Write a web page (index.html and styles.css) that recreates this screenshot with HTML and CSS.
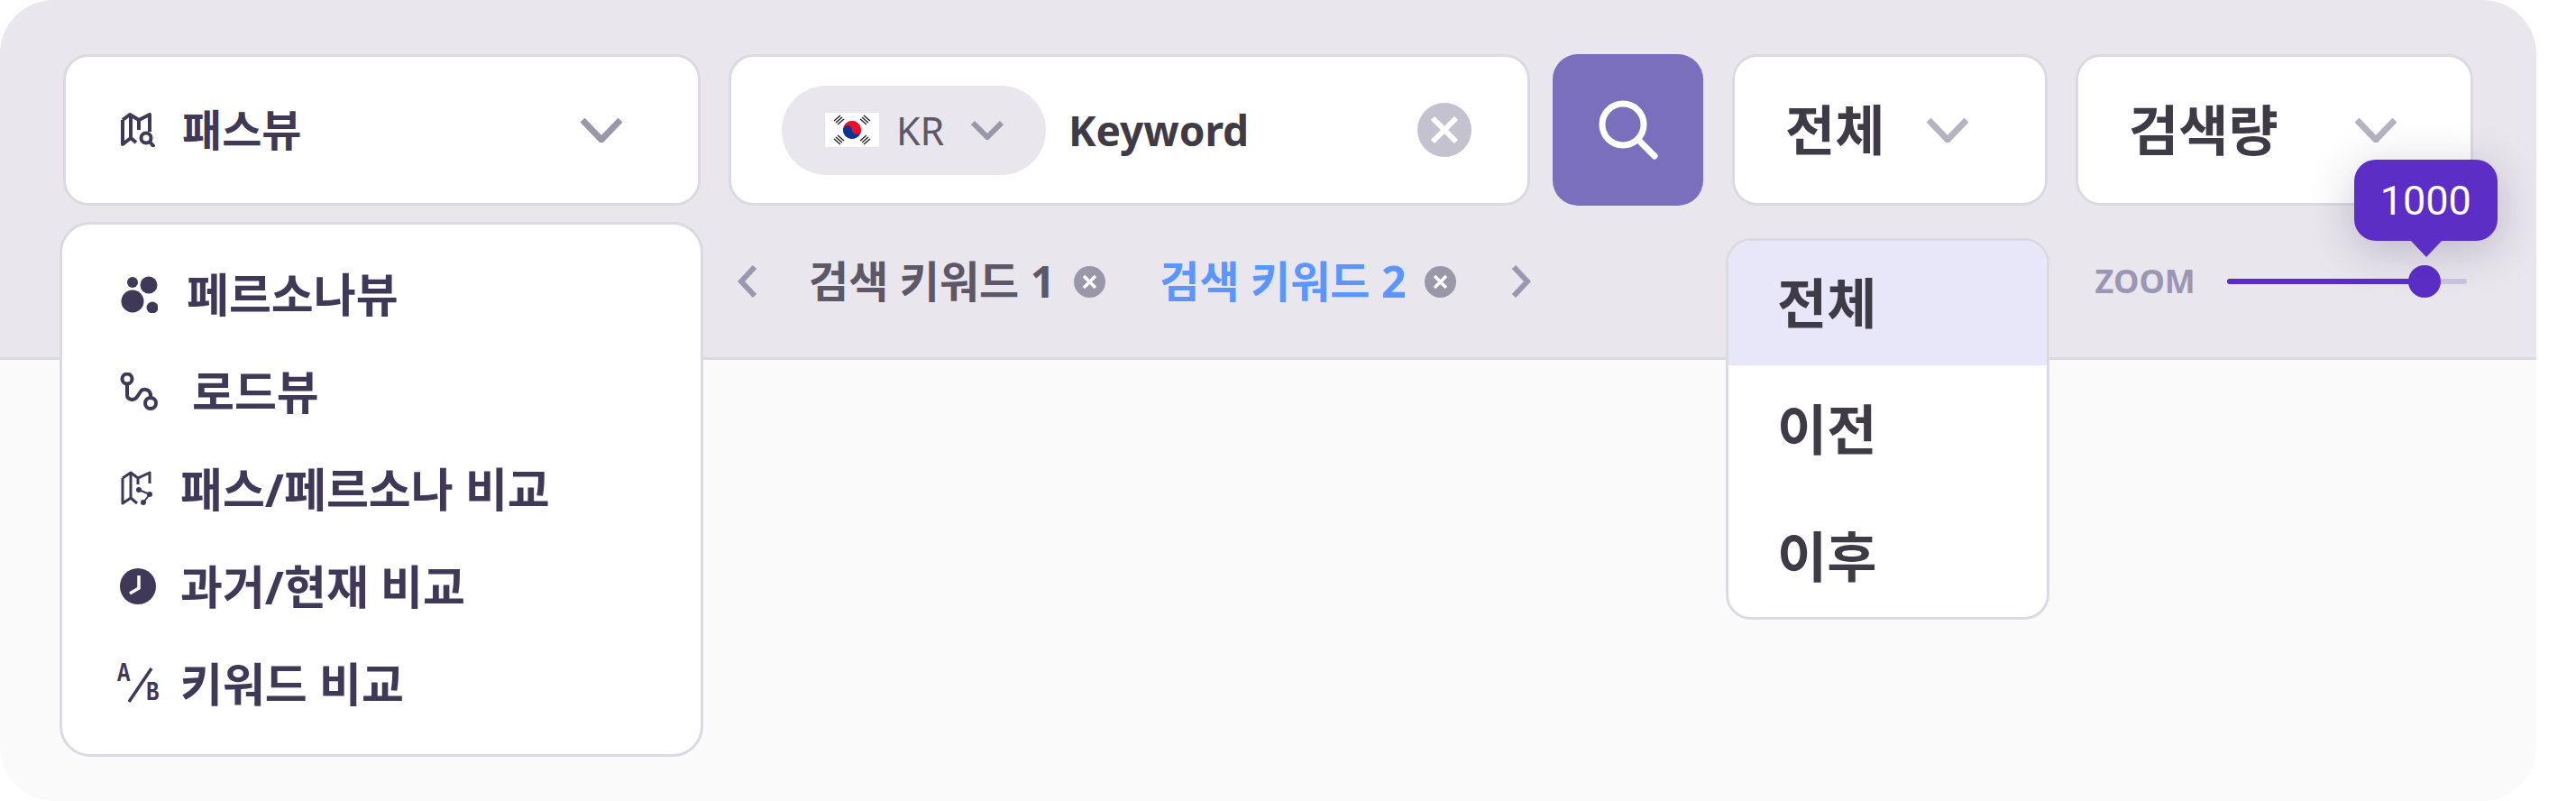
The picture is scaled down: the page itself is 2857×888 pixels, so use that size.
FILE: index.html
```html
<!DOCTYPE html>
<html lang="ko">
<head>
<meta charset="utf-8">
<title>패스뷰</title>
<link rel="stylesheet" href="styles.css">
</head>
<body>
<main class="card">
  <header class="topbar">
    <div class="row-controls">
      <div class="anchor">
        <button class="box view-select">
          <svg class="icon-38" viewBox="0 0 38 38"><path class="line" d="M2 8 10 2l10 6 12-6v19M2 8v27l9-7 6 5M11 2v26M20 8v11"/><circle class="line" cx="28" cy="28" r="5.5"/><path class="line" d="m32 32 5 6"/></svg>
          <span class="view-label">패스뷰</span>
          <svg class="chev-lg" viewBox="0 0 46 27"><path d="M2 2l21 22L44 2"/></svg>
        </button>
        <ul class="box menu">
          <li class="menu-item">
            <svg class="icon-42" viewBox="0 0 42 42"><circle cx="14" cy="29" r="12.5"/><circle cx="14" cy="8" r="6"/><circle cx="32" cy="11" r="9.5"/><circle cx="36" cy="36" r="6.5"/></svg>
            <span class="menu-text gap-persona">페르소나뷰</span>
          </li>
          <li class="menu-item">
            <svg class="icon-42" viewBox="0 0 42 42"><circle class="line" cx="8" cy="7" r="5.5"/><circle class="line" cx="34" cy="34" r="6"/><path class="line" d="M8 13v12q0 4 5 5 3 .5 6-3l4-6q2-3 6-2 5 1 5 7v2"/></svg>
            <span class="menu-text gap-road">로드뷰</span>
          </li>
          <li class="menu-item">
            <svg class="icon-42" viewBox="0 0 42 42"><path class="line-map" d="M3 9l9-6 8 6 13-6v12M3 9v28l9-6 7 6M12 3v28M20 9v7"/><circle cx="21" cy="22" r="3"/><circle cx="33" cy="27" r="3"/><circle cx="26" cy="36" r="3"/><path class="thin" d="M21 22l12 5-7 9"/></svg>
            <span class="menu-text gap-compare">패스/페르소나 비교</span>
          </li>
          <li class="menu-item">
            <svg class="icon-42" viewBox="0 0 42 42"><circle cx="20" cy="21" r="20"/><path class="hands" d="M21 9v14l-10 6"/></svg>
            <span class="menu-text gap-compare">과거/현재 비교</span>
          </li>
          <li class="menu-item">
            <div class="ab-icon">
              <svg class="ab-slash" viewBox="0 0 42 42"><path class="line-thin" d="M35 4 10 41"/></svg>
              <span class="ab-letter">A</span>
              <span class="ab-letter ab-b">B</span>
            </div>
            <span class="menu-text gap-compare">키워드 비교</span>
          </li>
        </ul>
      </div>

      <div class="box search">
        <div class="country">
          <svg class="flag" viewBox="0 0 60 38">
            <rect width="60" height="38" fill="#fff"/>
            <path d="M20 19a10 10 0 0 1 20 0z" fill="#e8112d"/>
            <path d="M20 19a10 10 0 0 0 20 0z" fill="#0c3590"/>
            <path d="M20 19a5 5 0 0 1 10 0 5 5 0 0 0 10 0 10 10 0 0 1-20 0z" fill="#0c3590"/>
            <path d="M30 19a5 5 0 0 0-10 0 10 10 0 0 1 20 0 5 5 0 0 1-10 0z" fill="#e8112d"/>
            <g class="trigrams">
              <path d="M10 9l7-6M12 11l7-6M14 13l7-6"/>
              <path d="M39 7l7 6M41 5l7 6M43 3l7 6"/>
              <path d="M10 29l7 6M12 27l7 6M14 25l7 6"/>
              <path d="M39 31l7-6M41 33l7-6M43 35l7-6"/>
            </g>
          </svg>
          <span class="country-code">KR</span>
          <svg class="chev-sm" viewBox="0 0 36 22"><path d="M2 3l16 16L34 3"/></svg>
        </div>
        <span class="keyword">Keyword</span>
        <svg class="clear" viewBox="0 0 60 60"><circle cx="30" cy="30" r="30"/><path d="M17 17l26 26M43 17 17 43"/></svg>
      </div>

      <button class="search-btn">
        <svg class="search-icon" viewBox="0 0 68 68"><circle cx="28" cy="28" r="23"/><path d="M45 45l18 18"/></svg>
      </button>

      <div class="anchor">
        <button class="box filter-select">
          <span class="big-label">전체</span>
          <svg class="chev-pale" viewBox="0 0 46 27"><path d="M2 2l21 22L44 2"/></svg>
        </button>
        <ul class="box filter-menu">
          <li class="filter-item is-active">전체</li>
          <li class="filter-item">이전</li>
          <li class="filter-item">이후</li>
        </ul>
      </div>

      <button class="box metric-select">
        <span class="big-label">검색량</span>
        <svg class="chev-pale" viewBox="0 0 46 27"><path d="M2 2l21 22L44 2"/></svg>
      </button>
    </div>

    <div class="row-tags">
      <svg class="arrow" viewBox="0 0 22 36"><path d="M19 2 4 18l15 16"/></svg>
      <span class="tag-text">검색 키워드 1</span>
      <svg class="tag-close" viewBox="0 0 35 35"><circle cx="17.5" cy="17.5" r="17.5"/><path d="M11 11l13 13M24 11 11 24"/></svg>
      <span class="tag-text is-current">검색 키워드 2</span>
      <svg class="tag-close" viewBox="0 0 35 35"><circle cx="17.5" cy="17.5" r="17.5"/><path d="M11 11l13 13M24 11 11 24"/></svg>
      <svg class="arrow arrow-next" viewBox="0 0 22 36"><path d="M3 2l15 16L3 34"/></svg>
      <div class="zoom">
        <span class="zoom-label">ZOOM</span>
        <div class="slider">
          <div class="slider-fill"></div>
          <div class="slider-thumb"></div>
          <div class="tooltip">1000</div>
        </div>
      </div>
    </div>
  </header>
</main>
</body>
</html>
```
FILE: styles.css
```css
* { box-sizing: border-box; }
html, body { margin: 0; padding: 0; background: #fff; }
body { font-family: "Noto Sans", "Noto Sans CJK KR", sans-serif; }
ul { list-style: none; margin: 0; padding: 0; }
button { font: inherit; padding: 0; margin: 0; }

.card {
  width: 2813px;
  height: 888px;
  border-radius: 60px;
  overflow: hidden;
  background: #fafafa;
}
.topbar {
  height: 399px;
  padding-top: 60px;
  background: #e9e6ed;
  border-bottom: 3px solid #dbd9e2;
}
.row-controls {
  display: flex;
  height: 168px;
  padding-left: 70px;
}
.anchor { position: relative; }
.box {
  background: #fff;
  border: 3px solid #dbd9e2;
  border-radius: 28px;
}

/* view select */
.view-select {
  display: flex;
  align-items: center;
  width: 707px;
  height: 168px;
  padding-left: 61px;
}
.icon-38 { width: 38px; height: 38px; flex: none; }
.icon-42 { width: 42px; height: 42px; flex: none; fill: #3f3857; }
.line { fill: none; stroke: #3f3857; stroke-width: 4; stroke-linejoin: round; }
.line-map { fill: none; stroke: #3f3857; stroke-width: 3; stroke-linejoin: round; }
.line-thin { fill: none; stroke: #3f3857; stroke-width: 3.5; }
.thin { fill: none; stroke: #3f3857; stroke-width: 2; }
.hands { fill: none; stroke: #fff; stroke-width: 3.5; }
.ab-icon {
  position: relative;
  display: flex;
  flex-direction: column;
  justify-content: space-between;
  width: 42px;
  height: 42px;
  flex: none;
}
.ab-slash { position: absolute; inset: 0; width: 42px; height: 42px; }
.ab-letter {
  font-family: "Liberation Mono", monospace;
  font-weight: 700;
  font-size: 30px;
  line-height: 21px;
  color: #3f3857;
  margin-left: -3px;
  transform: scaleX(0.8);
  transform-origin: left center;
}
.ab-b { align-self: flex-end; margin-right: -5px; margin-left: 0; }
.view-label {
  margin-left: 30px;
  font-size: 48px;
  font-weight: 700;
  color: #3f3857;
  line-height: 1;
}
.chev-lg { width: 46px; height: 27px; margin-left: auto; margin-right: 84px; fill: none; stroke: #9a97a8; stroke-width: 7; }
.chev-pale { width: 46px; height: 27px; flex: none; fill: none; stroke: #b5b3bf; stroke-width: 7; }

/* view menu */
.menu {
  position: absolute;
  top: 186px;
  left: -4px;
  width: 714px;
  height: 593px;
  padding: 23px 0 22px 64px;
  border-radius: 34px;
  z-index: 2;
}
.menu-item {
  display: flex;
  align-items: center;
  height: 108px;
}
.menu-text {
  font-size: 51px;
  font-weight: 700;
  color: #3f3857;
  line-height: 1;
  white-space: nowrap;
}
.gap-persona { margin-left: 32px; }
.gap-road { margin-left: 38px; }
.gap-compare { margin-left: 25px; }

/* search */
.search {
  display: flex;
  align-items: center;
  width: 889px;
  height: 168px;
  margin-left: 31px;
  padding-left: 56px;
}
.country {
  display: flex;
  align-items: center;
  width: 293px;
  height: 99px;
  padding-left: 48px;
  border-radius: 50px;
  background: #e9e6ed;
  flex: none;
}
.flag { width: 60px; height: 38px; flex: none; }
.trigrams { fill: none; stroke: #222; stroke-width: 1.4; }
.country-code {
  margin-left: 19px;
  font-size: 43px;
  line-height: 1;
  color: #5c5868;
}
.chev-sm { width: 36px; height: 22px; margin-left: 30px; fill: none; stroke: #9a97a8; stroke-width: 6; }
.keyword {
  margin-left: 25px;
  font-size: 46px;
  font-weight: 700;
  line-height: 1;
  color: #3e3a46;
}
.clear { width: 60px; height: 60px; margin-left: auto; margin-right: 62px; }
.clear circle { fill: #c5c2cf; }
.clear path { fill: none; stroke: #fff; stroke-width: 6; }

.search-btn {
  display: flex;
  align-items: center;
  justify-content: center;
  width: 167px;
  height: 168px;
  margin-left: 25px;
  margin-right: 32px;
  border: 0;
  border-radius: 28px;
  background: #7a6fbc;
}
.search-icon { width: 68px; height: 68px; fill: none; stroke: #fff; stroke-width: 7; stroke-linecap: round; }

/* filter */
.filter-select {
  display: flex;
  align-items: center;
  width: 350px;
  height: 168px;
  padding-left: 56px;
}
.big-label {
  font-size: 60px;
  font-weight: 700;
  line-height: 1;
  color: #3e3a46;
}
.filter-select .chev-pale { margin-left: 47px; }
.filter-menu {
  position: absolute;
  top: 204px;
  left: -7px;
  width: 359px;
  height: 423px;
  overflow: hidden;
  z-index: 2;
}
.filter-item {
  display: flex;
  align-items: center;
  height: 141px;
  padding-left: 54px;
  padding-bottom: 6px;
  font-size: 60px;
  font-weight: 700;
  color: #3e3a46;
}
.filter-item.is-active { height: 138px; background: #e8e6f9; }

.metric-select {
  display: flex;
  align-items: center;
  width: 441px;
  height: 168px;
  margin-left: 31px;
  padding-left: 56px;
}
.metric-select .chev-pale { margin-left: 85px; }

/* tag row */
.row-tags {
  display: flex;
  align-items: center;
  height: 168px;
  padding-left: 818px;
}
.arrow { width: 22px; height: 36px; flex: none; fill: none; stroke: #9a97b0; stroke-width: 6; }
.tag-text {
  margin-left: 57px;
  font-size: 48px;
  font-weight: 700;
  line-height: 1;
  color: #5c5868;
  white-space: nowrap;
}
.tag-text.is-current { margin-left: 60px; color: #5b96ff; }
.tag-close { width: 35px; height: 35px; flex: none; margin-left: 21px; }
.tag-close circle { fill: #9a97a8; }
.tag-close path { fill: none; stroke: #fff; stroke-width: 3.5; }
.arrow-next { margin-left: 61px; }

.zoom {
  display: flex;
  align-items: center;
  margin-left: 625px;
}
.zoom-label {
  font-size: 36px;
  font-weight: 700;
  line-height: 1;
  color: #9a96b4;
}
.slider {
  position: relative;
  width: 266px;
  height: 6px;
  margin-left: 35px;
  border-radius: 3px;
  background: #c9c6df;
}
.slider-fill {
  width: 219px;
  height: 100%;
  border-radius: 3px;
  background: #5c2ec6;
}
.slider-thumb {
  position: absolute;
  left: 201px;
  top: -15px;
  width: 36px;
  height: 36px;
  border-radius: 50%;
  background: #5c2ec6;
}
.tooltip {
  position: absolute;
  left: 141px;
  top: -132px;
  width: 159px;
  height: 90px;
  display: flex;
  align-items: center;
  justify-content: center;
  border-radius: 24px;
  background: #5c2ec6;
  color: #fff;
  font-family: Roboto, sans-serif;
  font-size: 45px;
  line-height: 1;
  box-shadow: 0 10px 50px rgba(50, 40, 90, 0.25);
}
.tooltip::after {
  content: "";
  position: absolute;
  left: 62px;
  top: 89px;
  border-left: 18px solid transparent;
  border-right: 18px solid transparent;
  border-top: 19px solid #5c2ec6;
}
```
